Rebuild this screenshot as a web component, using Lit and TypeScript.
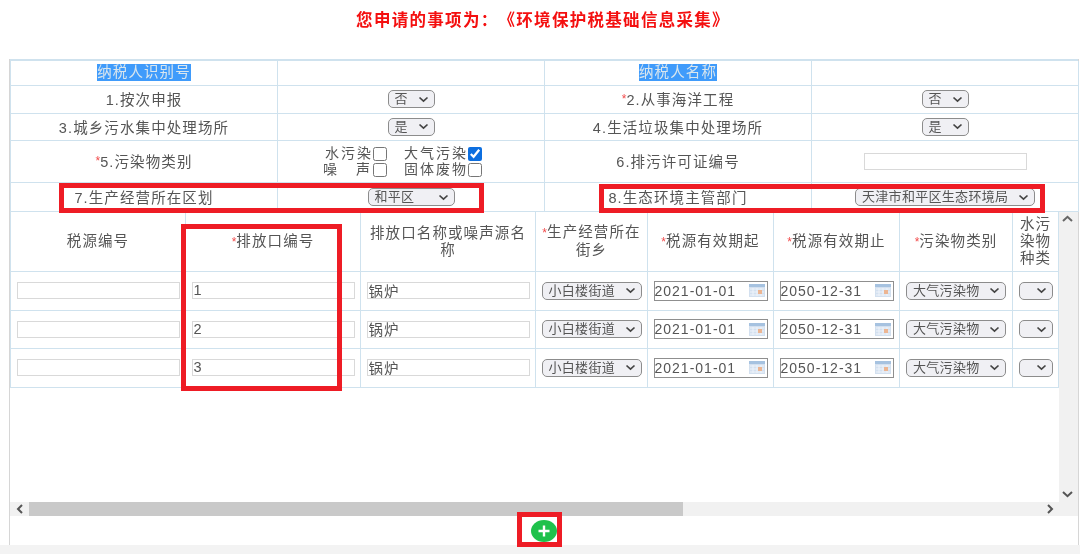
import { LitElement, html, css, svg } from "lit";
import { customElement } from "lit/decorators.js";

const chevron = svg`<svg class="chev" width="11" height="7" viewBox="0 0 11 7"><path d="M1.5 1.5 5.5 5.2 9.5 1.5" fill="none" stroke="#444" stroke-width="1.7"/></svg>`;
const cal = html`<svg class="cal" width="16" height="13" viewBox="0 0 16 13"><rect width="16" height="13" fill="#d3e0ef"/><rect y="0" width="16" height="3" fill="#a6c2e0"/><path d="M1 5h14M1 8h14M1 11h14M4 4v8M8 4v8M12 4v8" stroke="#eef3fa" stroke-width="1"/><rect x="9" y="6" width="4" height="4" fill="#ecb592"/></svg>`;

const rows = ["1", "2", "3"];

@customElement("app-root")
export class AppRoot extends LitElement {
  static styles = css`
    :host {
      display: block;
      width: 1080px;
      height: 554px;
      position: relative;
      overflow: hidden;
      background: #fff;
      color: #555;
      font-family: "Liberation Sans", "Noto Sans CJK SC", sans-serif;
      font-size: 14.5px;
      letter-spacing: 1.1px;
      text-spacing-trim: space-all;
    }
    .blurred { filter: blur(0.5px); height: 100%; display: flex; flex-direction: column; }
    .title {
      height: 59px;
      flex: none;
      box-sizing: border-box;
      padding: 10px 0 0 6px;
      text-align: center;
      color: #f40f0f;
      font-weight: 700;
      font-size: 16.5px;
      line-height: 20px;
      letter-spacing: 1.3px;
    }
    .panel {
      flex: none;
      height: 486px;
      margin-left: 9px;
      width: 1070px;
      box-sizing: border-box;
      border-left: 1px solid #d6d6d6;
      border-right: 1px solid #d6d6d6;
      display: flex;
      flex-direction: column;
    }
    .top {
      display: grid;
      grid-template-columns: 267px 267px 267px 267px;
      grid-template-rows: 25px 28px 27px 42px 29px;
      border-top: 2px solid #cfe2ee;
      border-left: 1px solid #cfe2ee;
      box-sizing: border-box;
      width: 1068px;
      flex: none;
    }
    .cell {
      display: flex;
      align-items: center;
      justify-content: center;
      text-align: center;
      box-sizing: border-box;
      border-right: 1.5px solid #cfe2ee;
      border-bottom: 1.5px solid #cfe2ee;
      min-width: 0;
    }
    .top .cell { padding-bottom: 2px; }
    .top .cell.c { padding-bottom: 1px; }
    .top .cell.z { padding-bottom: 0; }
    .hl { background: #3f9bfb; color: #d9e6ee; padding: 0; line-height: 17px; }
    .req { color: #f24b4b; font-size: 12px; letter-spacing: 0; }
    .sel {
      display: inline-flex;
      align-items: center;
      justify-content: space-between;
      box-sizing: border-box;
      height: 18px;
      padding: 0 5px 0 6px;
      border: 1px solid #8c8c8c;
      border-radius: 5px;
      background: #f0f0f4;
      color: #555;
      font-size: 13px;
      letter-spacing: 0.3px;
      white-space: nowrap;
      flex: none;
    }
    .sel > span { line-height: 16px; }
    .chev { flex: none; }
    .w47 { width: 47px; }
    .w87 { width: 87px; }
    .w180 { width: 180px; }
    .w100 { width: 100px; }
    .w33 { width: 34px; }
    .txt {
      box-sizing: border-box;
      width: 163px;
      height: 17px;
      border: 1px solid #d9d9d9;
      outline: none;
      padding: 0 1px 1px;
      margin: 0;
      background: #fff;
      color: #555;
      font: inherit;
      line-height: 14px;
      letter-spacing: 1px;
    }
    .checks {
      display: grid;
      grid-template-columns: 64px 78px;
      column-gap: 17px;
      row-gap: 1px;
      font-size: 14px;
      line-height: 15px;
      letter-spacing: 2px;
      margin-right: 17px;
      margin-top: 1px;
    }
    .chk { display: flex; justify-content: flex-end; align-items: center; white-space: nowrap; }
    .chk input { margin: 0; width: 14px; height: 14px; accent-color: #0d6fe0; flex: none; }
    .spread { display: flex; justify-content: space-between; width: 49px; margin-right: 1px; }
    .lower { flex: 1; display: flex; min-height: 0; }
    .view { width: 1049px; flex: none; overflow: hidden; }
    .grid {
      display: grid;
      grid-template-columns: 175px 175px 175px 112px 126px 126px 113px 46px;
      grid-template-rows: 60px 38.5px 38.5px 38.5px;
      border-left: 1px solid #cfe2ee;
      box-sizing: border-box;
      width: 1049px;
    }
    .head { line-height: 17px; padding: 0 4px; }
    .narrow { padding: 0 2px; }
    .date {
      display: flex;
      align-items: center;
      justify-content: space-between;
      box-sizing: border-box;
      width: 114px;
      height: 20px;
      border: 1.5px solid #8f8f8f;
      padding: 0 2px 0 0;
      letter-spacing: 1px;
      color: #555;
      font-size: 14px;
    }
    .cal { flex: none; }
    .vbar {
      flex: 1;
      background: #f1f1f1;
      display: flex;
      flex-direction: column;
      justify-content: space-between;
      align-items: center;
      padding: 3px 2px 4px 0;
    }
    .hbar {
      flex: none;
      height: 14px;
      background: #f1f1f1;
      display: flex;
      align-items: center;
    }
    .hbtn { width: 19px; display: flex; justify-content: center; flex: none; }
    .thumb { width: 654px; height: 100%; background: #c9c9c9; flex: none; }
    .hrest { flex: 1; display: flex; justify-content: flex-end; padding-right: 24px; }
    .foot { flex: none; height: 29px; display: flex; align-items: center; justify-content: center; }
    .add { display: block; }
    .strip { flex: 1; background: #f3f3f3; }
    .mark {
      position: absolute;
      box-sizing: border-box;
      border: 5px solid #ee1c25;
      pointer-events: none;
    }
    .m1 { left: 59px; top: 183px; width: 425px; height: 30px; }
    .m2 { left: 599px; top: 184px; width: 446px; height: 29px; }
    .m3 { left: 181px; top: 224px; width: 161px; height: 167px; }
    .m4 { left: 517px; top: 512px; width: 45px; height: 35px; }
  `;

  private sel(text: string, cls: string) {
    return html`<span class="sel ${cls}"><span>${text}</span>${chevron}</span>`;
  }

  private check(label: unknown, checked = false) {
    return html`<label class="chk">${label}<input type="checkbox" .checked=${checked} /></label>`;
  }

  render() {
    const req = html`<span class="req">*</span>`;
    return html`
      <div class="blurred">
        <div class="title">您申请的事项为：《环境保护税基础信息采集》</div>
        <div class="panel">
          <div class="top">
            <div class="cell"><span class="hl">纳税人识别号</span></div>
            <div class="cell"></div>
            <div class="cell"><span class="hl">纳税人名称</span></div>
            <div class="cell"></div>

            <div class="cell">1.按次申报</div>
            <div class="cell c">${this.sel("否", "w47")}</div>
            <div class="cell">${req}2.从事海洋工程</div>
            <div class="cell c">${this.sel("否", "w47")}</div>

            <div class="cell">3.城乡污水集中处理场所</div>
            <div class="cell c">${this.sel("是", "w47")}</div>
            <div class="cell">4.生活垃圾集中处理场所</div>
            <div class="cell c">${this.sel("是", "w47")}</div>

            <div class="cell">${req}5.污染物类别</div>
            <div class="cell c">
              <div class="checks">
                ${this.check("水污染")}
                ${this.check("大气污染", true)}
                ${this.check(html`<span class="spread"><span>噪</span><span>声</span></span>`)}
                ${this.check("固体废物")}
              </div>
            </div>
            <div class="cell">6.排污许可证编号</div>
            <div class="cell c"><input class="txt" /></div>

            <div class="cell">7.生产经营所在区划</div>
            <div class="cell c z">${this.sel("和平区", "w87")}</div>
            <div class="cell">8.生态环境主管部门</div>
            <div class="cell c z">${this.sel("天津市和平区生态环境局", "w180")}</div>
          </div>

          <div class="lower">
            <div class="view">
              <div class="grid">
                <div class="cell head">税源编号</div>
                <div class="cell head"><span>${req}排放口编号</span></div>
                <div class="cell head"><span>排放口名称或噪声源名称</span></div>
                <div class="cell head narrow"><span>${req}生产经营所在街乡</span></div>
                <div class="cell head"><span>${req}税源有效期起</span></div>
                <div class="cell head"><span>${req}税源有效期止</span></div>
                <div class="cell head"><span>${req}污染物类别</span></div>
                <div class="cell head narrow"><span>水污染物种类</span></div>
                ${rows.map(
                  (r) => html`
                    <div class="cell"><input class="txt" /></div>
                    <div class="cell"><input class="txt" .value=${r} /></div>
                    <div class="cell"><input class="txt" value="锅炉" /></div>
                    <div class="cell">${this.sel("小白楼街道", "w100")}</div>
                    <div class="cell"><span class="date"><span>2021-01-01</span>${cal}</span></div>
                    <div class="cell"><span class="date"><span>2050-12-31</span>${cal}</span></div>
                    <div class="cell">${this.sel("大气污染物", "w100")}</div>
                    <div class="cell">${this.sel("", "w33")}</div>
                  `
                )}
              </div>
            </div>
            <div class="vbar">
              <svg width="11" height="7" viewBox="0 0 11 7"><path d="M1 6 5.5 1.8 10 6" fill="none" stroke="#666" stroke-width="2"/></svg>
              <svg width="11" height="7" viewBox="0 0 11 7"><path d="M1 1 5.5 5.2 10 1" fill="none" stroke="#555" stroke-width="2"/></svg>
            </div>
          </div>
          <div class="hbar">
            <span class="hbtn"><svg width="7" height="10" viewBox="0 0 7 10"><path d="M6 1 2 5 6 9" fill="none" stroke="#555" stroke-width="2"/></svg></span>
            <span class="thumb"></span>
            <span class="hrest"><svg width="7" height="10" viewBox="0 0 7 10"><path d="M1 1 5 5 1 9" fill="none" stroke="#555" stroke-width="2"/></svg></span>
          </div>
          <div class="foot">
            <svg class="add" width="26" height="22" viewBox="0 0 26 22">
              <ellipse cx="13" cy="11" rx="13" ry="11" fill="#1fc14c"/>
              <path d="M13 5.5v11M7.5 11h11" stroke="#fff" stroke-width="2.4"/>
            </svg>
          </div>
        </div>
        <div class="strip"></div>
      </div>
      <div class="mark m1"></div>
      <div class="mark m2"></div>
      <div class="mark m3"></div>
      <div class="mark m4"></div>
    `;
  }
}
